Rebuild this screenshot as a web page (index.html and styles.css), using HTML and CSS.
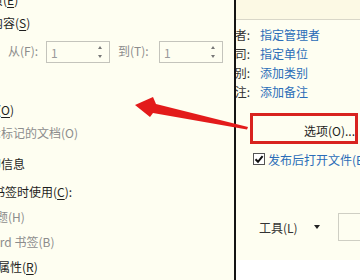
FILE: index.html
```html
<!DOCTYPE html>
<html lang="zh-CN">
<head>
    <meta charset="UTF-8">
    <meta name="viewport" content="width=device-width, initial-scale=1.0">
    <title>发布为 PDF - 选项</title>
    <link rel="stylesheet" href="styles.css">
</head>
<body>
    <div class="dialog">
        <!-- Left: options pane (cut off at the left edge) -->
        <div class="options">
            <div class="row row-page">当前页(<u>E</u>)</div>
            <div class="row row-selection">所选内容(<u>S</u>)</div>

            <div class="range">
                <span class="range-label from">从(F):</span>
                <div class="spin">
                    <span class="spin-value">1</span>
                    <span class="spin-arrows"><i class="up"></i><i class="down"></i></span>
                </div>
                <span class="range-label to">到(T):</span>
                <div class="spin">
                    <span class="spin-value">1</span>
                    <span class="spin-arrows"><i class="up"></i><i class="down"></i></span>
                </div>
            </div>

            <div class="row row-doc">文档(<u>O</u>)</div>
            <div class="row row-markup muted">显示标记的文档(O)</div>
            <div class="row row-info">包括非打印信息</div>
            <div class="row row-bookmarks">创建书签时使用(<u>C</u>):</div>
            <div class="row row-headings muted">标题(H)</div>
            <div class="row row-word muted">Word 书签(B)</div>
            <div class="row row-props">文档属性(<u>R</u>)</div>
        </div>

        <div class="divider"></div>

        <!-- Right: summary pane -->
        <div class="summary">
            <div class="summary-top"></div>

            <div class="fields">
                <span class="field-label"><span>管理者:</span></span><a class="field-link" href="#">指定管理者</a>
                <span class="field-label"><span>公司:</span></span><a class="field-link" href="#">指定单位</a>
                <span class="field-label"><span>类别:</span></span><a class="field-link" href="#">添加类别</a>
                <span class="field-label"><span>备注:</span></span><a class="field-link" href="#">添加备注</a>
            </div>

            <div class="highlight">
                <button class="options-button">选项(O)...</button>
            </div>

            <label class="check-row">
                <span class="checkbox">
                    <svg viewBox="0 0 10 10"><path d="M1.5 5.2 L4 7.8 L8.6 2.2" /></svg>
                </span>
                <span class="check-label">发布后打开文件(E)</span>
            </label>

            <div class="tools-row">
                <span class="tools-label">工具(L)</span>
                <span class="tools-caret"></span>
                <span class="tools-box"></span>
            </div>

            <div class="summary-foot"></div>
        </div>

        <!-- Red callout arrow drawn over the panes -->
        <svg class="callout" viewBox="0 0 360 280" width="360" height="280">
            <polygon points="135,105 153,97 156,104 248,127 247,129.5 153,113 150,117" />
        </svg>
    </div>
</body>
</html>
```

FILE: styles.css
```css
/* Page */
body {
    margin: 0;
    background: #fefef1;
    font-family: "Noto Sans CJK SC", "Liberation Sans", sans-serif;
    font-size: 12px;
    color: #1e1e1e;
}

.dialog {
    position: relative;
    display: flex;
    width: 360px;
    height: 280px;
    overflow: hidden;
}

/* Left options pane */
.options {
    width: 234px;
    flex-shrink: 0;
    display: flex;
    flex-direction: column;
    overflow: hidden;
}

.row {
    line-height: 16px;
    white-space: nowrap;
}

.row u {
    text-decoration: underline;
    text-underline-offset: 2px;
}

.muted {
    color: #8c8c8c;
}

.row-page { margin-top: -8px; margin-left: -33px; }
.row-selection { margin-top: 7px; margin-left: -33px; }
.row-doc { margin-top: 39px; margin-left: -27px; }
.row-markup { margin-top: 7px; margin-left: -23px; }
.row-info { margin-top: 15px; margin-left: -59px; }
.row-bookmarks { margin-top: 12px; margin-left: -31px; }
.row-headings { margin-top: 9px; margin-left: -16px; }
.row-word { margin-top: 9px; margin-left: -18px; }
.row-props { margin-top: 9px; margin-left: -26px; }

/* Page range inputs */
.range {
    display: flex;
    align-items: center;
    height: 22px;
    margin-top: 10px;
    color: #8c8c8c;
}

.range-label {
    white-space: nowrap;
    line-height: 16px;
    margin-top: -3px;
}

.range-label.from { margin-left: 8px; width: 38px; }
.range-label.to { margin-left: 8px; width: 41px; }

.spin {
    width: 64px;
    height: 22px;
    box-sizing: border-box;
    border: 1px solid #c4c4bc;
    display: flex;
    align-items: center;
    justify-content: space-between;
    padding: 0 7px 0 4px;
}

.spin-value {
    color: #9a9a9a;
}

.spin-arrows {
    display: flex;
    flex-direction: column;
    gap: 6px;
}

.spin-arrows i {
    width: 0;
    height: 0;
    border-left: 2.5px solid transparent;
    border-right: 2.5px solid transparent;
}

.spin-arrows .up { border-bottom: 3px solid #777; }
.spin-arrows .down { border-top: 3px solid #777; }

/* Divider between the panes */
.divider {
    width: 2px;
    flex-shrink: 0;
    background: #141414;
}

/* Right summary pane */
.summary {
    flex: 1;
    display: flex;
    flex-direction: column;
    overflow: hidden;
    min-width: 0;
}

.summary-top {
    height: 19px;
    flex-shrink: 0;
    background: #fcf9e4;
    border-bottom: 1px solid #d9d7c8;
}

.fields {
    display: grid;
    grid-template-columns: 14px 1fr;
    column-gap: 10px;
    row-gap: 3px;
    margin-top: 7px;
    line-height: 16px;
}

.field-label {
    display: flex;
    justify-content: flex-end;
    white-space: nowrap;
    color: #333;
}

.field-link {
    color: #2b6db8;
    text-decoration: none;
    white-space: nowrap;
}

/* Highlighted options button */
.highlight {
    margin: 13px 0 0 14px;
    width: 108px;
    height: 31px;
    box-sizing: border-box;
    border: 3px solid #d8231f;
    display: flex;
    justify-content: flex-end;
    flex-shrink: 0;
}

.options-button {
    border: none;
    background: transparent;
    padding: 3px 0 0;
    font: inherit;
    color: #1e1e1e;
    white-space: nowrap;
}

/* Checkbox */
.check-row {
    display: flex;
    align-items: center;
    margin: 9px 0 0 17px;
    height: 12px;
    white-space: nowrap;
}

.checkbox {
    width: 12px;
    height: 12px;
    box-sizing: border-box;
    border: 1px solid #555;
    background: #fff;
    flex-shrink: 0;
    display: flex;
}

.checkbox svg {
    width: 10px;
    height: 10px;
    fill: none;
    stroke: #111;
    stroke-width: 2;
}

.check-label {
    margin-left: 3px;
    color: #2b6db8;
}

/* Tools row */
.tools-row {
    display: flex;
    align-items: center;
    height: 28px;
    margin-top: 48px;
    flex-shrink: 0;
}

.tools-label {
    margin-left: 23px;
    white-space: nowrap;
    color: #333;
}

.tools-caret {
    margin-left: 16px;
    width: 0;
    height: 0;
    border-left: 3.5px solid transparent;
    border-right: 3.5px solid transparent;
    border-top: 4px solid #222;
}

.tools-box {
    margin-left: 18px;
    width: 40px;
    height: 28px;
    box-sizing: border-box;
    border: 1px solid #cfcfc4;
    flex-shrink: 0;
}

.summary-foot {
    margin-top: 19px;
    flex: 1;
    background: #ffffff;
}

/* Callout arrow overlay */
.callout {
    position: absolute;
    top: 0;
    left: 0;
    pointer-events: none;
}

.callout polygon {
    fill: #e31b1b;
}
```
